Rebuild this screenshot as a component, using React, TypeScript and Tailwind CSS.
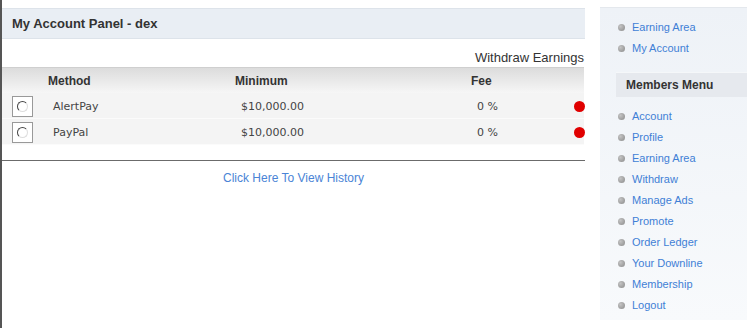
import React from 'react';

const methods = [
  { name: 'AlertPay', min: '$10,000.00', fee: '0 %' },
  { name: 'PayPal', min: '$10,000.00', fee: '0 %' },
];

const topLinks = ['Earning Area', 'My Account'];

const menuLinks = [
  'Account',
  'Profile',
  'Earning Area',
  'Withdraw',
  'Manage Ads',
  'Promote',
  'Order Ledger',
  'Your Downline',
  'Membership',
  'Logout',
];

const SideLink: React.FC<{ label: string }> = ({ label }) => (
  <li className="flex items-center h-[21px] pl-[18px]">
    <span className="w-[7px] h-[7px] rounded-full bg-[radial-gradient(circle_at_35%_35%,#c4c4c4,#8a8a8a)] mr-[7px]" />
    <a href="#" className="text-[11px] text-[#3f7fd6] leading-none">
      {label}
    </a>
  </li>
);

export default function App() {
  return (
    <div className="w-[747px] h-[328px] bg-white flex overflow-hidden font-['Liberation_Sans',Arial,sans-serif] text-[#333]">
      {/* main panel */}
      <div className="w-[585px] h-full border-l-2 border-[#555] flex flex-col pt-[8px]">
        <div className="h-[31px] bg-[#e9eef4] border-t border-b border-[#dde3ea] flex items-center pl-[10px]">
          <h3 className="text-[13px] font-bold text-[#333]">My Account Panel - dex</h3>
        </div>

        <div className="h-[28px] flex items-end justify-end pb-[3px] pr-px">
          <span className="text-[13px] leading-none text-[#333]">Withdraw Earnings</span>
        </div>

        <div className="pr-px">
          <div className="grid grid-cols-[46px_187px_236px_103px_1fr] h-[26px] items-center border-t border-[#cfcfcf] bg-gradient-to-b from-[#dcdcdc] to-[#f6f6f6] text-[12px] font-bold text-[#333]">
            <span />
            <span>Method</span>
            <span>Minimum</span>
            <span>Fee</span>
            <span />
          </div>

          {methods.map((m, i) => (
            <div
              key={i}
              className="grid grid-cols-[46px_187px_236px_103px_1fr] h-[26px] items-center bg-[#f4f4f4] border-b border-[#fbfbfb] text-[11px] text-[#444] font-['DejaVu_Sans',sans-serif]"
            >
              <span className="pl-[10px] pt-[1px]">
                <span className="w-[21px] h-[21px] border border-[#999] bg-white flex items-center justify-center">
                  <span className="w-[11px] h-[11px] rounded-full border border-t-[#444] border-l-[#444] border-r-[#ddd] border-b-[#ddd] bg-white" />
                </span>
              </span>
              <span className="pl-[5px] pt-[3px]">{m.name}</span>
              <span className="pl-[6px] pt-[3px]">{m.min}</span>
              <span className="pl-[6px] pt-[3px]">{m.fee}</span>
              <span className="flex justify-start pt-[1px]">
                <span className="w-[11px] h-[11px] rounded-full bg-[#e00000]" />
              </span>
            </div>
          ))}
        </div>

        <div className="mt-[15px] border-t border-[#6b6b6b] pt-[8px] flex justify-center">
          <a href="#" className="text-[12px] text-[#4a84d6]">
            Click Here To View History
          </a>
        </div>
      </div>

      {/* sidebar */}
      <div className="ml-[15px] flex-1 mt-[7px] h-[313px] border-t border-[#e4e8ed] bg-gradient-to-b from-[#eef2f7] to-[#f8fafc]">
        <ul className="pt-[9px]">
          {topLinks.map((l) => (
            <SideLink key={l} label={l} />
          ))}
        </ul>

        <div className="mt-[13px] ml-[16px] h-[25px] bg-[#e6e9ee] border-t border-[#f5f7f9] flex items-center pl-[10px]">
          <span className="text-[12px] font-bold text-[#333]">Members Menu</span>
        </div>

        <ul className="pt-[9px]">
          {menuLinks.map((l) => (
            <SideLink key={l} label={l} />
          ))}
        </ul>
      </div>
    </div>
  );
}
